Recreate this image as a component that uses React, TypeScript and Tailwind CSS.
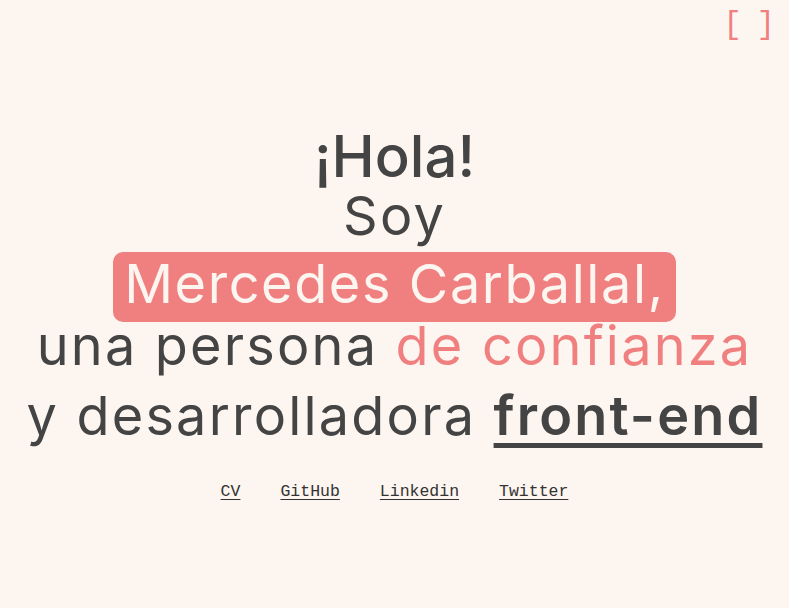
import React from 'react';

const links = ['CV', 'GitHub', 'Linkedin', 'Twitter'];

export default function App() {
  return (
    <div className="relative min-h-screen bg-[#fdf5f0] text-[#444] flex flex-col items-center pt-[127px] font-['Inter',sans-serif]">
      <button className="absolute top-[9px] right-[16px] text-[31px] leading-none tracking-[-2px] text-[#f08080] font-['Liberation_Mono',monospace]">
        [ ]
      </button>

      <h1 className="flex flex-col items-center text-center text-[54px] leading-[58px] font-normal tracking-[2.2px]">
        <span className="block text-[58px] font-medium tracking-normal">¡Hola!</span>
        <span className="block mt-[2px]">Soy</span>
        <span className="mt-[7px] bg-[#f08080] text-[#fdf5f0] rounded-[10px] px-[11px] pb-[6px] leading-[64px] tracking-[1.6px]">
          Mercedes Carballal,
        </span>
        <span className="block mt-[-5px]">
          una persona <span className="text-[#f08080]">de confianza</span>
        </span>
        <span className="block mt-[12px]">
          y desarrolladora{' '}
          <span className="font-semibold underline decoration-[5px] underline-offset-[8px]">front-end</span>
        </span>
      </h1>

      <nav className="flex gap-[40px] mt-[37px] text-[16.5px] leading-[20px] font-['Liberation_Mono',monospace] text-[#333]">
        {links.map(l => (
          <a key={l} href="#" className="underline underline-offset-[3px]">
            {l}
          </a>
        ))}
      </nav>
    </div>
  );
}
